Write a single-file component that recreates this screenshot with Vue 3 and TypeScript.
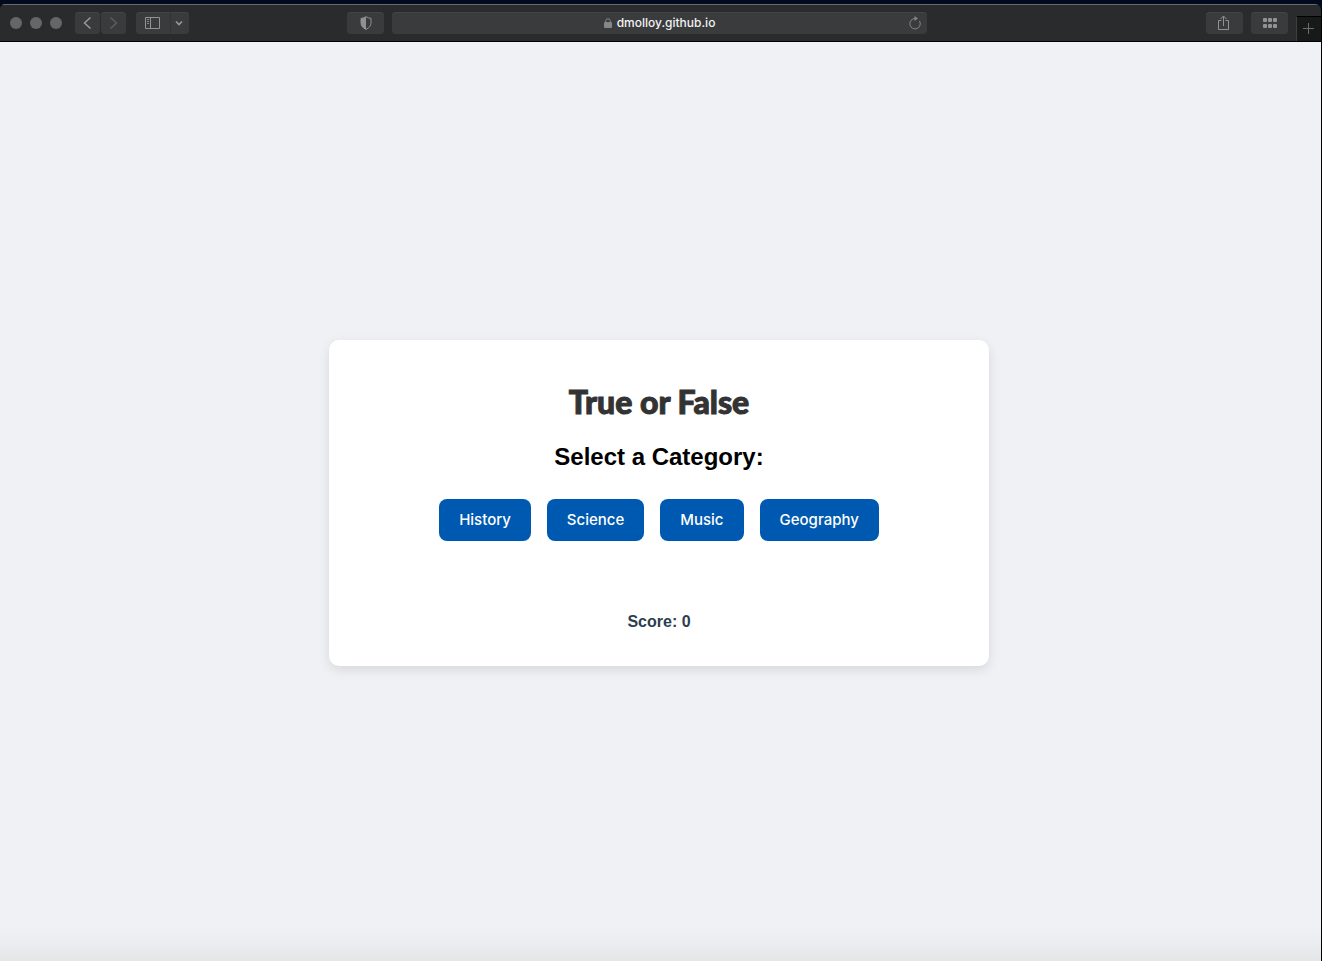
<script setup lang="ts">
import { ref } from 'vue'

const categories: string[] = ['History', 'Science', 'Music', 'Geography']
const score = ref<number>(0)
const address = ref<string>('dmolloy.github.io')
const dots: { x: number; y: number }[] = [1, 6, 11].flatMap((x) => [
  { x, y: 1 },
  { x, y: 7 },
])
</script>

<template>
  <div class="desktop">
    <div class="window">
      <header class="toolbar">
        <div class="lights">
          <button class="light" type="button" aria-label="Close"></button>
          <button class="light" type="button" aria-label="Minimise"></button>
          <button class="light" type="button" aria-label="Zoom"></button>
        </div>
        <div class="nav">
          <button class="tool narrow" type="button" aria-label="Back">
            <svg width="9" height="14" viewBox="0 0 9 14"><path d="M7.500 1.500 1.500 7l6 5.500" stroke="#98999a" stroke-width="1.500" /></svg>
          </button>
          <button class="tool narrow" type="button" aria-label="Forward">
            <svg width="9" height="14" viewBox="0 0 9 14"><path d="M1.500 1.500 7.500 7l-6 5.500" stroke="#5c5d5e" stroke-width="1.500" /></svg>
          </button>
        </div>
        <div class="side">
          <button class="tool panel" type="button" aria-label="Sidebar">
            <svg width="16" height="12" viewBox="0 0 16 12">
              <path d="M.5.5h14v11H.5zM5.500.500v11" stroke="#929394" />
              <path d="M2 2.500h2M2 4.500h2M2 6.500h2" stroke="#858687" />
            </svg>
          </button>
          <button class="tool chevron" type="button" aria-label="Sidebar options">
            <svg width="8" height="6" viewBox="0 0 8 6"><path d="m1 1.500 3 3 3-3" stroke="#98999a" stroke-width="1.600" /></svg>
          </button>
        </div>
        <div class="space-left"></div>
        <button class="tool wide" type="button" aria-label="Privacy report">
          <svg width="14" height="14" viewBox="0 0 14 14">
            <path d="M7 .7c1.600 1 3.200 1.500 5 1.700v4.300c0 3-1.800 5.200-5 6.700-3.200-1.500-5-3.700-5-6.700V2.400C3.800 2.200 5.400 1.700 7 .7z" stroke="#909192" />
            <path d="M7 .7v12.700C3.800 11.900 2 9.700 2 6.700V2.400C3.800 2.200 5.400 1.700 7 .7z" fill="#909192" />
          </svg>
        </button>
        <div class="address">
          <span class="site">
            <svg width="8" height="10" viewBox="0 0 8 10">
              <rect y="4" width="8" height="6" rx="1" fill="#858687" />
              <path d="M1.700 4.500V3a2.300 2.300 0 0 1 4.600 0v1.500" stroke="#858687" />
            </svg>
            <span>{{ address }}</span>
          </span>
          <button class="reload" type="button" aria-label="Reload">
            <svg width="12" height="14" viewBox="0 0 12 14">
              <path d="M10.500 5A5.200 5.200 0 1 1 6 2.500" stroke="#858687" />
              <path d="M5.500 0v5l3.500-2.500z" fill="#858687" />
            </svg>
          </button>
        </div>
        <div class="space-right"></div>
        <button class="tool wide" type="button" aria-label="Share">
          <svg width="13" height="16" viewBox="0 0 13 16">
            <path d="M3.500 5.500h-3v9h10v-9h-3M5.500 11V1.500M2.500 4l3-3 3 3" stroke="#929394" />
          </svg>
        </button>
        <button class="tool wide" type="button" aria-label="Tab overview">
          <svg width="16" height="12" viewBox="0 0 16 12">
            <rect v-for="d in dots" :key="`${d.x}-${d.y}`" :x="d.x" :y="d.y" width="4" height="4" rx="1" fill="#929394" />
          </svg>
        </button>
        <button class="new-tab" type="button" aria-label="New tab">
          <svg width="12" height="12" viewBox="0 0 12 12"><path d="M5.500 0v11M0 5.500h11" stroke="#6b6d6c" /></svg>
        </button>
      </header>
      <main class="page">
        <section class="card">
          <h1>True or False</h1>
          <h2>Select a Category:</h2>
          <div class="categories">
            <button v-for="name in categories" :key="name" class="category" type="button">{{ name }}</button>
          </div>
          <p class="score">Score: {{ score }}</p>
        </section>
      </main>
    </div>
  </div>
</template>

<style>
body {
  margin: 0;
  background: #000;
}
</style>

<style scoped>
.desktop {
  box-sizing: border-box;
  min-height: 100vh;
  padding: 4px 1px 0 0;
  display: flex;
  background: linear-gradient(#020a20 0 8px, #000 8px);
}
.window {
  flex: 1;
  display: flex;
  flex-direction: column;
  border-radius: 5px 6px 0 0;
  overflow: hidden;
}
button {
  margin: 0;
  padding: 0;
  border: 0;
  background: none;
}
svg {
  display: block;
  fill: none;
}
.toolbar {
  box-sizing: border-box;
  height: 38px;
  display: flex;
  align-items: center;
  padding-left: 10px;
  background: #2a2b2d;
  border-top: 1px solid #6b6b6b;
  border-bottom: 1px solid #000;
}
.lights {
  display: flex;
  gap: 8px;
  margin-right: 13px;
}
.light {
  width: 12px;
  height: 12px;
  border-radius: 50%;
  background: #656766;
}
.tool {
  height: 22px;
  display: flex;
  align-items: center;
  justify-content: center;
  border-radius: 4px;
  background: #3a3b3d;
  box-shadow: inset 0 1px #434446;
}
.nav {
  display: flex;
  gap: 1px;
  margin-right: 10px;
}
.narrow {
  width: 25px;
}
.side {
  display: flex;
  gap: 1px;
  border-radius: 4px;
  background: #323335;
}
.panel {
  width: 34px;
  border-radius: 4px 0 0 4px;
}
.chevron {
  width: 18px;
  padding-right: 2px;
  border-radius: 0 4px 4px 0;
}
.space-left {
  flex: 158 1 0;
}
.space-right {
  flex: 279 1 0;
}
.wide {
  width: 37px;
  margin-right: 8px;
}
.address {
  flex: 535 1 0;
  height: 22px;
  display: flex;
  align-items: center;
  border-radius: 4px;
  background: #3a3b3d;
  box-shadow: inset 0 1px #434446;
}
.site {
  flex: 1;
  padding-left: 18px;
  display: flex;
  align-items: center;
  justify-content: center;
  gap: 5px;
  color: #f2f2f2;
  font: 500 12px/24px Inter, sans-serif;
}
.reload {
  margin-right: 6px;
}
.new-tab {
  align-self: flex-end;
  width: 25px;
  height: 25px;
  display: flex;
  align-items: center;
  justify-content: center;
  background: #181a19;
  border-top: 1px solid #000;
  border-left: 1px solid #3e3f40;
}
.page {
  flex: 1;
  display: flex;
  align-items: center;
  justify-content: center;
  padding: 3px 3px 0 0;
  background: linear-gradient(to top, #e5e6e8, #f0f1f5 32px);
}
.card {
  box-sizing: border-box;
  width: 660px;
  padding: 40px 30px 34px;
  border-radius: 10px;
  background: #fff;
  box-shadow: 0 4px 12px rgba(0, 0, 0, 0.1);
  text-align: center;
  font-family: "Liberation Sans", Arial, sans-serif;
}
h1 {
  margin: 0 0 18px;
  color: #333;
  font: 900 32px/44px Lato, sans-serif;
  -webkit-text-stroke: 1px #333;
}
h2 {
  margin: 0 0 27px;
  color: #000;
  font-size: 24px;
  line-height: 30px;
}
.categories {
  display: flex;
  justify-content: center;
  gap: 16px;
}
.category {
  padding: 10px 20px;
  border-radius: 8px;
  background: #0059b0;
  color: #fff;
  font: 500 15px/22px Inter, sans-serif;
}
.score {
  margin: 71px 0 0;
  color: #2c3e50;
  font-size: 16px;
  font-weight: bold;
  line-height: 20px;
}
</style>
